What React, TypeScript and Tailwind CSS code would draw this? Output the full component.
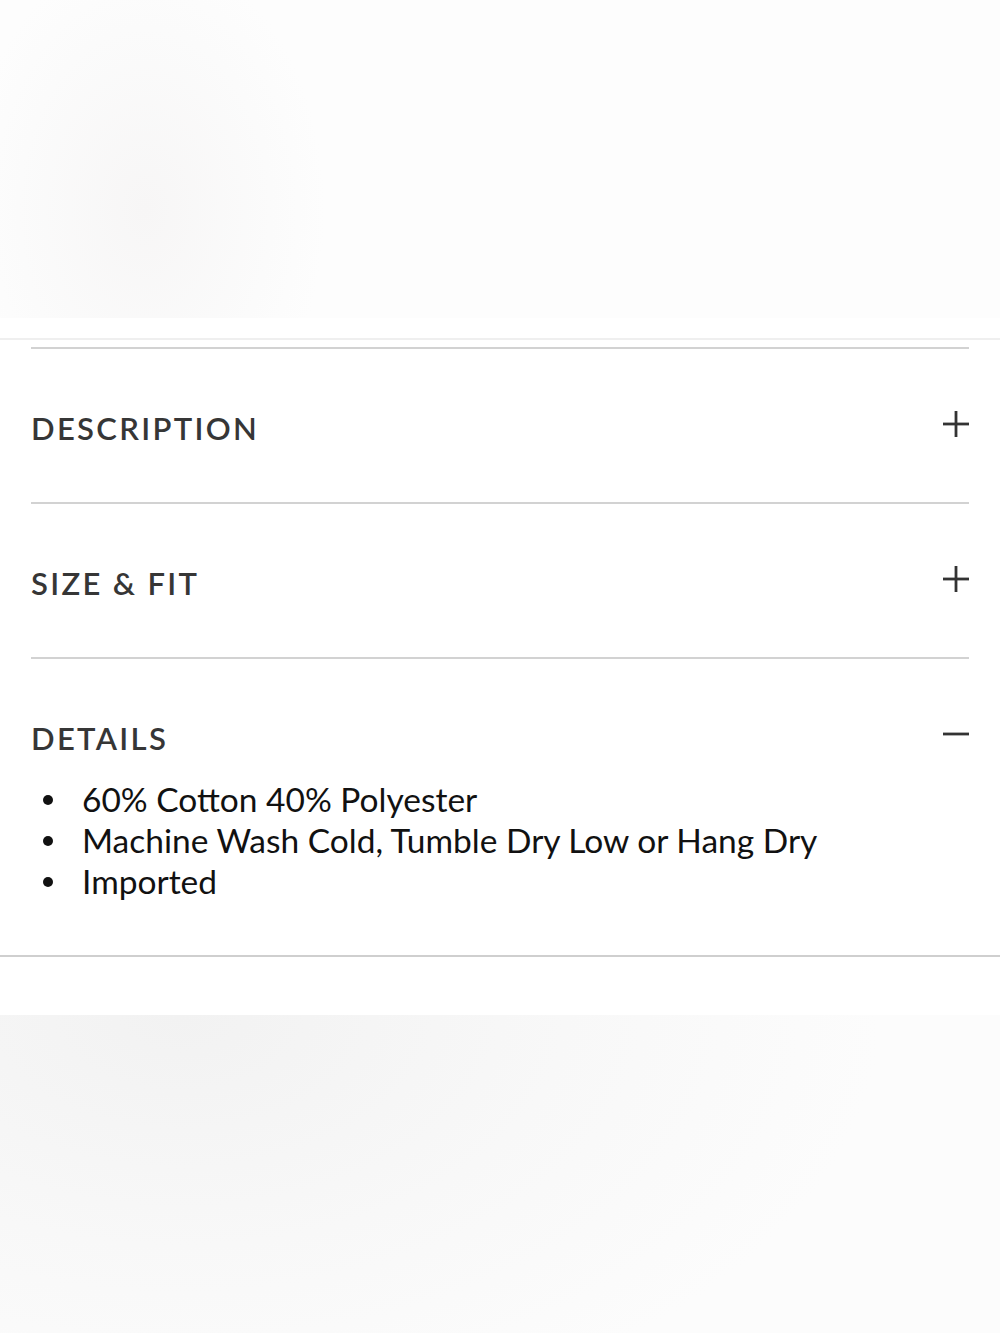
import { useState } from "react";

interface Section {
  id: string;
  title: string;
  items: string[];
}

const sections: Section[] = [
  { id: "description", title: "DESCRIPTION", items: [] },
  { id: "size", title: "SIZE & FIT", items: [] },
  {
    id: "details",
    title: "DETAILS",
    items: [
      "60% Cotton 40% Polyester",
      "Machine Wash Cold, Tumble Dry Low or Hang Dry",
      "Imported",
    ],
  },
];

function ToggleIcon({ open }: { open: boolean }) {
  return (
    <svg width="26" height="26" viewBox="0 0 26 26" className="text-[#333]">
      <path d="M0 13h26" stroke="currentColor" strokeWidth="2.8" />
      {!open && <path d="M13 0v26" stroke="currentColor" strokeWidth="2.8" />}
    </svg>
  );
}

export default function App() {
  const [openId, setOpenId] = useState<string | null>("details");

  return (
    <div className="min-h-[1333px] bg-white font-['Lato',sans-serif]">
      {/* product image placeholder */}
      <div className="h-[318px] bg-[radial-gradient(ellipse_180px_260px_at_145px_210px,#f7f6f6,#fbfbfb_70%,#fdfdfd)]" />

      <div className="mt-[20px] border-t-2 border-[#efefef] pt-[7px]">
        <div className="mx-[31px] border-t-2 border-[#d2d2d2]">
          {sections.map((section, i) => {
            const isOpen = openId === section.id;
            const last = i === sections.length - 1;
            return (
              <div
                key={section.id}
                className={last ? "" : "border-b-2 border-[#d2d2d2]"}
              >
                <button
                  onClick={() => setOpenId(isOpen ? null : section.id)}
                  className={`w-full flex items-center justify-between pt-[59px] ${
                    isOpen ? "pb-0" : "pb-[54px]"
                  }`}
                >
                  <span className="text-[31px] leading-[40px] font-semibold tracking-[0.075em] text-[#363636]">
                    {section.title}
                  </span>
                  <span className="-translate-y-[4px]">
                    <ToggleIcon open={isOpen} />
                  </span>
                </button>
                {isOpen && section.items.length > 0 && (
                  <ul className="pt-[21px] pb-[53px] text-[33.5px] leading-[41px] text-[#111]">
                    {section.items.map((item) => (
                      <li key={item} className="flex items-center">
                        <span className="ml-[12px] mr-[29px] w-[10px] h-[10px] rounded-full bg-[#111] shrink-0" />
                        {item}
                      </li>
                    ))}
                  </ul>
                )}
              </div>
            );
          })}
        </div>
      </div>

      <div className="border-t-2 border-[#cfcfcf]" />

      {/* next image placeholder */}
      <div className="mt-[58px] h-[318px] bg-[radial-gradient(ellipse_700px_420px_at_180px_0px,#f2f2f2,#f8f8f8_55%,#fcfcfc)]" />
    </div>
  );
}
